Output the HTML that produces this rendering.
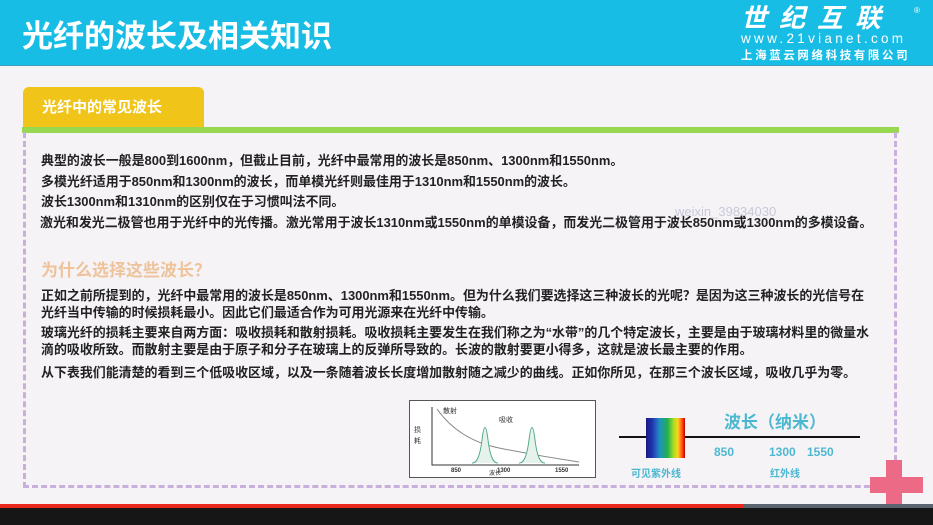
<!DOCTYPE html>
<html><head><meta charset="utf-8"><style>
*{margin:0;padding:0;box-sizing:border-box}
body{width:933px;height:525px;overflow:hidden;background:#f6f3f7;position:relative;font-family:"Liberation Sans","Noto Sans CJK SC",sans-serif}
.hdr{position:absolute;left:0;top:0;width:933px;height:66px;background:#18bde6;border-bottom:1px solid #3a9fbf}
.title{position:absolute;left:22px;top:11px;font-size:31px;font-weight:bold;color:#fff}
.logo1{position:absolute;left:741px;top:3px;font-size:26px;line-height:30px;font-weight:bold;font-style:italic;color:#fff;letter-spacing:12px;white-space:nowrap}
.logo2{position:absolute;left:741px;top:32px;font-size:13.5px;line-height:14px;color:#fff;letter-spacing:3.3px}
.logo3{position:absolute;left:741px;top:47px;font-size:11.5px;color:#fff;font-weight:bold;letter-spacing:2.6px;white-space:nowrap}
.tab{position:absolute;left:23px;top:87px;width:181px;height:41px;background:#f0c418;border-radius:6px 6px 0 0;color:#fff;font-size:15px;font-weight:bold;padding:9px 0 0 19px}
.green{position:absolute;left:22px;top:127px;width:877px;height:6px;background:#98d850}
.box{position:absolute;left:23px;top:132px;width:874px;height:356px;border:3px dashed #c7b0db;border-top:none}
.t{position:absolute;left:41px;font-size:12.95px;font-weight:bold;color:#222;white-space:nowrap}
.h2{position:absolute;left:41px;top:256px;font-size:17px;font-weight:bold;color:#eec39a;font-family:"Noto Sans CJK SC",sans-serif}
.plus{position:absolute;background:#ec6a86}
.red{position:absolute;left:0;top:504px;width:743px;height:4px;background:#e8281e}
.grey{position:absolute;left:743px;top:504px;width:190px;height:4px;background:#5c6470}
.blk{position:absolute;left:0;top:508px;width:933px;height:17px;background:#161616}
.cyan{position:absolute;color:#4cb8d0;font-weight:bold}
</style></head><body>
<div class="hdr"></div>
<div class="title">光纤的波长及相关知识</div>
<div class="logo1">世纪互联</div>
<div style="position:absolute;left:914px;top:6px;font-size:8px;color:#fff">®</div>
<div class="logo2">www.21vianet.com</div>
<div class="logo3">上海蓝云网络科技有限公司</div>
<div class="tab">光纤中的常见波长</div>
<div class="green"></div>
<div class="box"></div>
<div class="t" style="top:150px">典型的波长一般是800到1600nm，但截止目前，光纤中最常用的波长是850nm、1300nm和1550nm。</div>
<div class="t" style="top:171px">多模光纤适用于850nm和1300nm的波长，而单模光纤则最佳用于1310nm和1550nm的波长。</div>
<div class="t" style="top:191px">波长1300nm和1310nm的区别仅在于习惯叫法不同。</div>
<div class="t" style="top:212px;left:40px">激光和发光二极管也用于光纤中的光传播。激光常用于波长1310nm或1550nm的单模设备，而发光二极管用于波长850nm或1300nm的多模设备。</div>
<div style="position:absolute;left:675px;top:204px;font-size:13px;color:#c8c8d8">weixin_39834030</div>
<div class="h2">为什么选择这些波长？</div>
<div class="t" style="top:285px">正如之前所提到的，光纤中最常用的波长是850nm、1300nm和1550nm。但为什么我们要选择这三种波长的光呢？是因为这三种波长的光信号在</div>
<div class="t" style="top:302px">光纤当中传输的时候损耗最小。因此它们最适合作为可用光源来在光纤中传输。</div>
<div class="t" style="top:322px">玻璃光纤的损耗主要来自两方面：吸收损耗和散射损耗。吸收损耗主要发生在我们称之为“水带”的几个特定波长，主要是由于玻璃材料里的微量水</div>
<div class="t" style="top:339px">滴的吸收所致。而散射主要是由于原子和分子在玻璃上的反弹所导致的。长波的散射要更小得多，这就是波长最主要的作用。</div>
<div class="t" style="top:362px">从下表我们能清楚的看到三个低吸收区域，以及一条随着波长长度增加散射随之减少的曲线。正如你所见，在那三个波长区域，吸收几乎为零。</div>
<svg style="position:absolute;left:409px;top:400px" width="187" height="78">
<rect x="0.5" y="0.5" width="186" height="77" fill="#fff" stroke="#555"/>
<path d="M23 7 V65 H170" stroke="#333" fill="none"/>
<path d="M28 9 Q50 40 90 48 T170 62" stroke="#888" fill="none"/>
<path d="M63 63 Q70 64 73 40 Q76 15 79 40 Q82 64 89 63" stroke="#5a8" fill="#e6f3ec"/>
<path d="M110 63 Q117 64 120 40 Q123 15 126 40 Q129 64 136 63" stroke="#5a8" fill="#e6f3ec"/>
<text x="34" y="13" font-size="7" fill="#333">散射</text>
<text x="90" y="22" font-size="7" fill="#333">吸收</text>
<text x="5" y="32" font-size="7" fill="#333">损</text>
<text x="5" y="43" font-size="7" fill="#333">耗</text>
<text x="42" y="72" font-size="6" font-weight="bold" fill="#333">850</text>
<text x="88" y="72" font-size="6" font-weight="bold" fill="#333">1300</text>
<text x="146" y="72" font-size="6" font-weight="bold" fill="#333">1550</text>
</svg>
<div style="position:absolute;left:489px;top:468px;font-size:6px;color:#333">波长</div>
<div style="position:absolute;left:619px;top:436px;width:241px;height:2px;background:#111"></div>
<div style="position:absolute;left:646px;top:418px;width:39px;height:40px;background:linear-gradient(90deg,#1a1a80,#2030b0 15%,#2090c0 35%,#20b050 55%,#b0e020 72%,#ffd020 82%,#ff3010 95%,#a00)"></div>
<div class="cyan" style="left:724px;top:408px;font-size:17px;font-family:'Noto Sans CJK SC',sans-serif">波长（纳米）</div>
<div class="cyan" style="left:714px;top:445px;font-size:12px">850</div>
<div class="cyan" style="left:769px;top:445px;font-size:12px">1300</div>
<div class="cyan" style="left:807px;top:445px;font-size:12px">1550</div>
<div class="cyan" style="left:631px;top:465px;font-size:10px">可见紫外线</div>
<div class="cyan" style="left:770px;top:465px;font-size:10px">红外线</div>
<div class="plus" style="left:886px;top:460px;width:16px;height:46px"></div>
<div class="plus" style="left:870px;top:477px;width:53px;height:16px"></div>
<div class="red"></div><div class="grey"></div><div class="blk"></div>
</body></html>
